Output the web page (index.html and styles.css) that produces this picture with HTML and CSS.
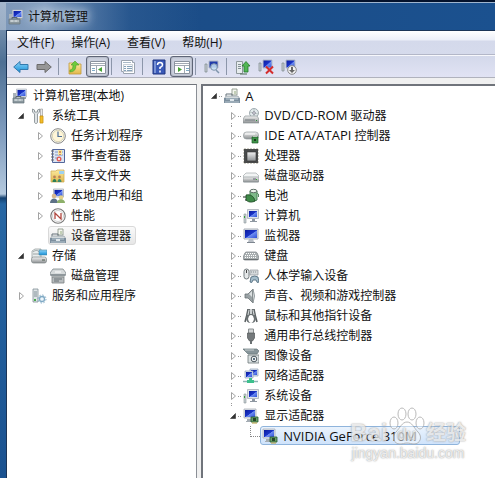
FILE: index.html
```html
<!DOCTYPE html>
<html lang="zh-CN">
<head>
    <meta charset="UTF-8">
    <meta name="viewport" content="width=device-width, initial-scale=1.0">
    <title>计算机管理</title>
    <link rel="stylesheet" href="styles.css">
</head>
<body>
    <!-- Icon set -->
    <svg class="sprite" aria-hidden="true">
        <defs>
            <linearGradient id="g-screen" x1="0" y1="0" x2="1" y2="1"><stop offset="0" stop-color="#0a1a9c"/><stop offset=".5" stop-color="#1a34c8"/><stop offset=".55" stop-color="#6d8cf0"/><stop offset="1" stop-color="#2f50d8"/></linearGradient>
            <linearGradient id="g-metal" x1="0" y1="0" x2="0" y2="1"><stop offset="0" stop-color="#f2f2f2"/><stop offset="1" stop-color="#8d9193"/></linearGradient>
            <linearGradient id="g-blue" x1="0" y1="0" x2="0" y2="1"><stop offset="0" stop-color="#8fd4f8"/><stop offset="1" stop-color="#1590d8"/></linearGradient>
            <linearGradient id="g-folder" x1="0" y1="0" x2="0" y2="1"><stop offset="0" stop-color="#fbeaa0"/><stop offset="1" stop-color="#e2b84c"/></linearGradient>

            <symbol id="closed" viewBox="0 0 16 20"><path d="M4.500 6.500v7l4-3.500z" fill="#fff" stroke="#a3a3a3"/></symbol>
            <symbol id="closed-line" viewBox="0 0 16 20"><path d="M4 0h1v1H4zM4 17h1v1H4zM4 19h1v1H4zM11 10h1v1h-1zM13 10h1v1h-1z" fill="#999"/><path d="M4.500 6.500v7l4-3.500z" fill="#fff" stroke="#a3a3a3"/></symbol>
            <symbol id="open" viewBox="0 0 16 20"><path d="M8.500 7.500v5h-5z" fill="#333" stroke="#333" stroke-width=".6"/></symbol>
            <symbol id="open-line" viewBox="0 0 16 20"><path d="M11 10h1v1h-1zM13 10h1v1h-1z" fill="#999"/><path d="M8.500 7.500v5h-5z" fill="#333" stroke="#333" stroke-width=".6"/></symbol>
            <symbol id="elbow" viewBox="0 0 16 20"><path d="M4.500 0v11M5 10.500h9" stroke="#888" stroke-dasharray="1 1" fill="none"/></symbol>

            <symbol id="monitor" viewBox="0 0 16 16"><path d="M1 1h14v10H1z" fill="#dfe4ec" stroke="#a9afb8"/><path d="M2 2h12v8H2z" fill="url(#g-screen)"/><path d="M6 11h4l1 3H5z" fill="#b8bec6"/><path d="M4 14h8v1H4z" fill="#7d858f"/></symbol>
            <symbol id="pc" viewBox="0 0 16 16"><path d="M1 6h2v9H1z" fill="#c8d0d4" stroke="#8c9498" stroke-width=".6"/><path d="M1 8h1v2H1z" fill="#35a135"/><path d="M4.500 1.500h11v9h-11z" fill="#dfe4ec" stroke="#a9afb8" stroke-width=".8"/><path d="M6 3h8v6H6z" fill="url(#g-screen)"/><path d="M9 11h3v2h2v1H7v-1h2z" fill="#8f98a2"/></symbol>
            <symbol id="manage" viewBox="0 0 16 16"><path d="M1 5h3v5H1z" fill="#aab3ba"/><path d="M4.500 1h10v8h-10z" fill="#dfe4ec" stroke="#a9afb8" stroke-width=".6"/><path d="M5.500 2h8v6h-8z" fill="url(#g-screen)"/><path d="M10 9h4v2h-4z" fill="#9aa3ab"/><path d="M1 10h11v5H1z" fill="#8b989f" stroke="#66737b" stroke-width=".7"/><path d="M2 12h9M4 11v2M8 11v2" stroke="#d7dfe2"/><path d="M4 10V8.500h5V10" fill="none" stroke="#59656d"/></symbol>
            <symbol id="tools" viewBox="0 0 16 16"><path d="M1.500 1v3l2 2v8c0 2 3 2 3 0V6l2-2V1L6.500 2v2h-3V2z" fill="#e0e4e6" stroke="#7f888c" stroke-width=".8"/><path d="M9.500 1h2v7h-2z" fill="#e9e9e9" stroke="#909090" stroke-width=".6"/><path d="M9 8h3v7H9z" fill="#f3bd28" stroke="#c99212" stroke-width=".8"/></symbol>
            <symbol id="clock" viewBox="0 0 16 16"><circle cx="8" cy="8" r="7.300" fill="#fbfbf2" stroke="#858585" stroke-width="1"/><circle cx="8" cy="8" r="5.700" fill="#fff6d8" stroke="#c9c3a0" stroke-width=".7"/><path d="M8 3.500v5h4" fill="none" stroke="#4d6f9a" stroke-width="1.200"/></symbol>
            <symbol id="event" viewBox="0 0 16 16"><path d="M2.500 1.500h12v13h-12z" fill="#dce5f3" stroke="#53679c"/><path d="M5 4h8M5 7h8M5 10h4" stroke="#8298c4"/><path d="M1 3h3M1 6h3M1 9h3M1 12h3" stroke="#6a6a6a"/><path d="M8 2h4v5H8z" fill="#f7e9a0"/><path d="M10 3v2M10 6v1" stroke="#b43322"/><circle cx="9" cy="11" r="2.500" fill="#e0605a"/><path d="M8 10l2 2m0-2l-2 2" stroke="#fff" stroke-width=".8"/></symbol>
            <symbol id="share" viewBox="0 0 16 16"><path d="M1 3h5l1-1h7v12H1z" fill="url(#g-folder)" stroke="#cfae5c" stroke-width=".8"/><path d="M9 3h5v3H9z" fill="#9fd1ef"/><circle cx="4.500" cy="9" r="1.400" fill="#b98258"/><circle cx="9.500" cy="9" r="1.400" fill="#b98258"/><path d="M2.500 14c0-4 4-4 4 0z" fill="#2c7f54"/><path d="M7.500 14c0-4 4-4 4 0z" fill="#3a8a70"/></symbol>
            <symbol id="users" viewBox="0 0 16 16"><path d="M3.500 1h10v8h-10z" fill="#dfe4ec" stroke="#a9afb8" stroke-width=".8"/><path d="M4.500 2h8v6h-8z" fill="url(#g-screen)"/><circle cx="4" cy="8" r="2.300" fill="#d8b88c"/><path d="M0 15c0-6 8-6 8 0z" fill="#5d7186"/><circle cx="11" cy="9.500" r="2.300" fill="#e5d189"/><path d="M7 15c0-5 8-5 8 0z" fill="#8db06a"/></symbol>
            <symbol id="perf" viewBox="0 0 16 16"><circle cx="8" cy="8" r="7.200" fill="#fff" stroke="#777" stroke-width="1.100"/><circle cx="8" cy="8" r="5.500" fill="#fff" stroke="#bbb" stroke-width=".7"/><path d="M5 11V5l6 6V5" fill="none" stroke="#b0463e" stroke-width="1.300"/></symbol>
            <symbol id="device" viewBox="0 0 16 16"><path d="M8 1h5v6H8z" fill="#f3f5ee" stroke="#8f9a8d" stroke-width=".9"/><path d="M10 3h2v3h-2z" fill="#c2cfb6"/><path d="M2 8V6h6v2" fill="none" stroke="#66737b"/><path d="M2 8h12l2 3H0z" fill="#d3d9dc" stroke="#849098" stroke-width=".6"/><path d="M0 10h16v5H0z" fill="#7d8f9e"/><path d="M2 11h12M1 14h14" stroke="#b9c7d0"/><path d="M6 11h4v2H6z" fill="#dfe7ec"/></symbol>
            <symbol id="storage" viewBox="0 0 16 16"><path d="M1 3l3-2h6v9H1z" fill="#e9eded" stroke="#8d9696" stroke-width=".7"/><path d="M2 4c2-2 5-2 6 0M2 6h6" stroke="#9ba4a5" fill="none"/><path d="M8 2h8v5H8z" fill="url(#g-blue)" stroke="#4f89a6" stroke-width=".6"/><rect x="0.500" y="9" width="15" height="6" rx="2" fill="url(#g-metal)" stroke="#808888" stroke-width=".7"/><path d="M11 12h3" stroke="#4b5b4d"/></symbol>
            <symbol id="disks" viewBox="0 0 16 16"><path d="M3 1h10l3 4-1 3H1L0 5z" fill="#d6dadb" stroke="#7f888b" stroke-width=".8"/><path d="M1 6h14v2H1z" fill="#8f979b"/><path d="M5 4h6" stroke="#fff"/><path d="M2 9h12v6H2z" fill="#b8bdbf" stroke="#787f82" stroke-width=".8"/><path d="M4 11h8M4 13h5" stroke="#666f73"/></symbol>
            <symbol id="services" viewBox="0 0 16 16"><path d="M2 1h5v13H2z" fill="#dfe5e7" stroke="#829097" stroke-width=".8"/><path d="M3 4h3M3 6h3M3 8h3" stroke="#819098"/><path d="M3 11h2v2H3z" fill="#48a94e"/><circle cx="11" cy="11" r="2.500" fill="#eef6fb" stroke="#7fa9c4" stroke-width="1.300"/><circle cx="11" cy="11" r="4" fill="none" stroke="#7fa9c4" stroke-dasharray="1.500 1.600"/></symbol>

            <symbol id="dvd" viewBox="0 0 16 16"><circle cx="11" cy="5" r="4.500" fill="#e4ebee" stroke="#8c989e" stroke-width=".8"/><path d="M11 1v8M7 4l8 2" stroke="#b8c5c0"/><circle cx="11" cy="5" r="1.300" fill="#fff" stroke="#889"/><path d="M2 8h12l2 3v4H0v-4z" fill="url(#g-metal)" stroke="#8c9598" stroke-width=".7"/><path d="M2 12h10" stroke="#757d80"/><path d="M13 12h1v1h-1z" fill="#2b8f39"/></symbol>
            <symbol id="ide" viewBox="0 0 16 16"><rect x="0.500" y="4" width="15" height="7" rx="3" fill="url(#g-metal)" stroke="#949b9e" stroke-width=".7"/><path d="M2 6h10" stroke="#fff"/><path d="M9 9h6v6H9z" fill="#3f9247" stroke="#1b5b26" stroke-width=".7"/><path d="M11 11h2v2h-2z" fill="#1b3b20"/><path d="M10 7h4v2h-4z" fill="#b9c3ba"/></symbol>
            <symbol id="cpu" viewBox="0 0 16 16"><path d="M2 0v16M5 0v16M8 0v16M11 0v16M14 0v16M0 2h16M0 5h16M0 8h16M0 11h16M0 14h16" stroke="#8f8a73" stroke-width=".8"/><path d="M1 1h14v14H1z" fill="#494b4b"/><path d="M4 4h9v9H4z" fill="url(#g-metal)" stroke="#333" stroke-width=".6"/></symbol>
            <symbol id="drive" viewBox="0 0 16 16"><path d="M3 5h10l3 3v5q0 1-1 1H1q-1 0-1-1V8z" fill="#f2f4f4" stroke="#a5abad" stroke-width=".7"/><path d="M0 9h16v4q0 1-1 1H1q-1 0-1-1z" fill="url(#g-metal)" stroke="#8e9598" stroke-width=".7"/><path d="M10 11h3" stroke="#667"/><path d="M13 11h1v1h-1z" fill="#30b030"/></symbol>
            <symbol id="battery" viewBox="0 0 16 16"><path d="M0 9h4M2 12h3" stroke="#69706c" stroke-width="1.500"/><path d="M7 3h7v9q-4 3-7 0z" fill="#7fbb8a" stroke="#4d8459"/><ellipse cx="10.500" cy="3" rx="3.500" ry="1.700" fill="#edf3ed" stroke="#61716a"/><path d="M3 7c4-1 8 1 9 6-4 2-7 1-9-1z" fill="#3f8a48" stroke="#1c4823" stroke-width=".8"/><path d="M14 5q2 0 1.500 4" fill="none" stroke="#4d8459"/></symbol>
            <symbol id="keyboard" viewBox="0 0 16 16"><path d="M3 4h10q1 0 2 3l1 3q0 2-2 2H2q-2 0-2-2l1-3q1-3 2-3z" fill="#a9afb1" stroke="#858c8f" stroke-width=".8"/><path d="M3 5.500h10M2 7.500h12M2 9.500h12" stroke="#fff" stroke-dasharray="1 1"/><path d="M1 11.500h14" stroke="#6a7072"/></symbol>
            <symbol id="hid" viewBox="0 0 16 16"><rect x="1" y="1" width="5" height="10" rx="2.500" fill="#e5e8e9" stroke="#757d80"/><path d="M3.500 2v3" stroke="#444"/><path d="M7 2h8v5H7z" fill="#d4d9db" stroke="#929a9d" stroke-width=".7"/><path d="M8 4h6" stroke="#879094" stroke-dasharray="1 1"/><path d="M7 14l1-5q4-2 7 0l1 5q-2 2-3-2h-3q-1 4-3 2z" fill="#a4bdcb" stroke="#476375" stroke-width=".8"/></symbol>
            <symbol id="sound" viewBox="0 0 16 16"><path d="M2 6h3l5-5v14l-5-5H2z" fill="#9aa2a5" stroke="#6b7275" stroke-width=".8"/><path d="M10 1q3 7 0 14" fill="#d7dcde" stroke="#959da0"/><path d="M6 6l3-3v6z" fill="#dce0e1"/></symbol>
            <symbol id="mouse" viewBox="0 0 16 16"><path d="M5 1q-1 6-3 13" stroke="#555b5d" stroke-width="1.500" fill="none"/><path d="M11 1q1 6 3 13" stroke="#555b5d" stroke-width="1.500" fill="none"/><path d="M5 1h6l2 9q0 5-5 5t-5-5z" fill="#6a7072"/><path d="M6 8q2-2 4 0l1 3q-1 4-3 4t-3-4z" fill="#fff"/><path d="M6 2l-1 5M10 2l1 5" stroke="#d5d9da"/><path d="M8 1v5" stroke="#f1f3f4" stroke-width="1.500"/></symbol>
            <symbol id="usb" viewBox="0 0 16 16"><path d="M5.500 1h5v5h-5z" fill="#d1d4d5" stroke="#8a8f91"/><path d="M4.500 5h7v5l-2 3h-3l-2-3z" fill="#74797b" stroke="#515657" stroke-width=".7"/><path d="M8 13v3" stroke="#6b7173" stroke-width="2"/></symbol>
            <symbol id="camera" viewBox="0 0 16 16"><path d="M0 1h14l2 2-2 3H5z" fill="#87959a" stroke="#66757a" stroke-width=".7"/><path d="M2 2h9" stroke="#c9cfd0"/><path d="M5 7h11v8H5z" fill="#dbe1e2" stroke="#6c777a" stroke-width=".8"/><circle cx="11" cy="11" r="2.800" fill="#fff" stroke="#48555c"/><circle cx="11" cy="11" r="1.200" fill="#556d7c"/></symbol>
            <symbol id="network" viewBox="0 0 16 16"><path d="M7 1h8v7H7z" fill="#dce5f1" stroke="#8c9eb6" stroke-width=".7"/><path d="M8 2h6v5H8z" fill="url(#g-screen)"/><path d="M2 3h8v7H2z" fill="#dce5f1" stroke="#8c9eb6" stroke-width=".7"/><path d="M3 4h6v5H3z" fill="url(#g-screen)"/><path d="M0 13.500h15" stroke="#8eb5b5" stroke-width="1.500"/><path d="M6 10v2H4v3h7v-3H9v-2z" fill="#3cc08c"/></symbol>
            <symbol id="display" viewBox="0 0 16 16"><path d="M1 1h12v9H1z" fill="#dfe4ec" stroke="#a9afb8" stroke-width=".8"/><path d="M2 2h10v7H2z" fill="url(#g-screen)"/><path d="M4 11h5v3H3v-1h1z" fill="#a5adb4"/><path d="M8 9h7v5H8z" fill="#689e6a" stroke="#275b2c" stroke-width=".8"/><path d="M10 10h3v3h-3z" fill="#26472a"/><path d="M9 15h5" stroke="#b29c3a"/></symbol>

            <symbol id="back" viewBox="0 0 16 16"><path d="M.700 8L7 2.500V5.500h8v5H7v3z" fill="url(#g-blue)" stroke="#3479ac"/></symbol>
            <symbol id="forward" viewBox="0 0 16 16"><path d="M15.300 8L9 2.500V5.500H1v5h8v3z" fill="#969696" stroke="#6b6b6b"/></symbol>
            <symbol id="up" viewBox="0 0 16 16"><path d="M2 4h6l1 1h5v10H2z" fill="url(#g-folder)" stroke="#c1993c" stroke-width=".8"/><path d="M3 11q3 0 3-5H4l4-4 4 4H9q0 7-6 7z" fill="#6dcb3c" stroke="#4b9a2d" stroke-width=".6"/></symbol>
            <symbol id="pane-left" viewBox="0 0 16 16"><path d="M.5 2.500h15v12H.5z" fill="#fff" stroke="#8a929e"/><path d="M1 4.500h14M1 6.500h14M6.500 7v7" stroke="#a2a9b3"/><path d="M2 9.500h3M2 11.500h3" stroke="#7eaac7"/><path d="M12 8v5l-4-2.500z" fill="#48a337"/></symbol>
            <symbol id="pane-right" viewBox="0 0 16 16"><path d="M.5 2.500h15v12H.5z" fill="#fff" stroke="#8a929e"/><path d="M1 4.500h14M1 6.500h14M10.500 7v7" stroke="#a2a9b3"/><path d="M12 9.500h3M12 11.500h3" stroke="#7eaac7"/><path d="M4 8v5l4-2.500z" fill="#48a337"/></symbol>
            <symbol id="props" viewBox="0 0 16 16"><path d="M1.500 1.500h11v2h2v11h-11v-2h-2z" fill="#fff" stroke="#9aa3af"/><path d="M3 3.500h8" stroke="#a9b9c7"/><path d="M3.500 5.500h9v7h-9z" fill="#f9fafb" stroke="#b5bcc5" stroke-width=".7"/><path d="M4 7.500h2M7 7.500h5M4 9.500h2M7 9.500h5M4 11.500h2M7 11.500h5" stroke="#86a2b8"/></symbol>
            <symbol id="help" viewBox="0 0 16 16"><path d="M2 1h12v14H2z" fill="#3a59b8" stroke="#203680"/><path d="M3 2h2v12H3z" fill="#7892d5"/><path d="M6.500 6q0-2.500 2.500-2.500t2.500 2.500q0 1.500-2.500 2.500v1.500M9 11.500v2" fill="none" stroke="#fff" stroke-width="1.500"/></symbol>
            <symbol id="scan" viewBox="0 0 16 16"><path d="M1 5h2v8H1z" fill="#c8d0d4" stroke="#7c868b" stroke-width=".7"/><path d="M5 2h9v7H5z" fill="#203caa" stroke="#b5bdc8"/><circle cx="10" cy="8" r="3.300" fill="#c9e4f6" fill-opacity=".85" stroke="#7f95ac"/><path d="M12 11l3 3" stroke="#7f95ac" stroke-width="1.500"/></symbol>
            <symbol id="update" viewBox="0 0 16 16"><path d="M1.500 2.500h6v12h-6z" fill="#e7ecee" stroke="#8f999d"/><path d="M3 5.500h3M3 7.500h3M3 9.500h3" stroke="#838f95"/><path d="M9 13V7H7l4-4.500L15 7h-2v6z" fill="#51b654" stroke="#24782b" stroke-width=".8"/><path d="M5 15h7" stroke="#4f6a54"/></symbol>
            <symbol id="remove" viewBox="0 0 16 16"><path d="M1 4h2v8H1z" fill="#c8d0d4" stroke="#7c868b" stroke-width=".7"/><path d="M5 1h9v8H5z" fill="url(#g-screen)" stroke="#b5bdc8"/><path d="M8 7.500l7 7M15 7.500l-7 7" stroke="#d42c2c" stroke-width="2"/></symbol>
            <symbol id="disable" viewBox="0 0 16 16"><path d="M1 4h2v8H1z" fill="#c8d0d4" stroke="#7c868b" stroke-width=".7"/><path d="M5 1h9v8H5z" fill="url(#g-screen)" stroke="#b5bdc8"/><circle cx="11" cy="11" r="4.300" fill="#f3f3f3" stroke="#888"/><path d="M10 8h2v3h2l-3 3-3-3h2z" fill="#666"/></symbol>
        </defs>
    </svg>

    <div class="window">
        <header class="titlebar">
            <svg class="icon"><use href="#manage"/></svg>
            <h1>计算机管理</h1>
        </header>

        <main class="client">
            <nav class="menubar">
                <button>文件(F)</button>
                <button>操作(A)</button>
                <button>查看(V)</button>
                <button>帮助(H)</button>
            </nav>

            <div class="toolbar" role="toolbar">
                <button aria-label="后退"><svg class="icon"><use href="#back"/></svg></button>
                <button aria-label="前进"><svg class="icon"><use href="#forward"/></svg></button>
                <span class="separator"></span>
                <button aria-label="向上"><svg class="icon"><use href="#up"/></svg></button>
                <button class="pressed" aria-label="控制台树" aria-pressed="true"><svg class="icon"><use href="#pane-left"/></svg></button>
                <span class="separator"></span>
                <button aria-label="属性"><svg class="icon"><use href="#props"/></svg></button>
                <span class="separator"></span>
                <button aria-label="帮助"><svg class="icon"><use href="#help"/></svg></button>
                <button class="pressed" aria-label="操作窗格" aria-pressed="true"><svg class="icon"><use href="#pane-right"/></svg></button>
                <span class="separator"></span>
                <button aria-label="扫描"><svg class="icon"><use href="#scan"/></svg></button>
                <span class="separator"></span>
                <button aria-label="更新"><svg class="icon"><use href="#update"/></svg></button>
                <button aria-label="卸载"><svg class="icon"><use href="#remove"/></svg></button>
                <button aria-label="禁用"><svg class="icon"><use href="#disable"/></svg></button>
            </div>

            <div class="panes">
                <section class="pane console">
                    <ul class="tree" role="tree">
                        <li>
                            <div class="row root"><span class="item"><svg class="icon"><use href="#manage"/></svg>计算机管理(本地)</span></div>
                        </li>
                        <li>
                            <div class="row"><svg class="twisty"><use href="#open"/></svg><span class="item"><svg class="icon"><use href="#tools"/></svg>系统工具</span></div>
                            <ul>
                                <li class="row"><svg class="twisty"><use href="#closed"/></svg><span class="item"><svg class="icon"><use href="#clock"/></svg>任务计划程序</span></li>
                                <li class="row"><svg class="twisty"><use href="#closed"/></svg><span class="item"><svg class="icon"><use href="#event"/></svg>事件查看器</span></li>
                                <li class="row"><svg class="twisty"><use href="#closed"/></svg><span class="item"><svg class="icon"><use href="#share"/></svg>共享文件夹</span></li>
                                <li class="row"><svg class="twisty"><use href="#closed"/></svg><span class="item"><svg class="icon"><use href="#users"/></svg>本地用户和组</span></li>
                                <li class="row"><svg class="twisty"><use href="#closed"/></svg><span class="item"><svg class="icon"><use href="#perf"/></svg>性能</span></li>
                                <li class="row"><svg class="twisty"></svg><span class="item current"><svg class="icon"><use href="#device"/></svg>设备管理器</span></li>
                            </ul>
                        </li>
                        <li>
                            <div class="row"><svg class="twisty"><use href="#open"/></svg><span class="item"><svg class="icon"><use href="#storage"/></svg>存储</span></div>
                            <ul>
                                <li class="row"><svg class="twisty"></svg><span class="item"><svg class="icon"><use href="#disks"/></svg>磁盘管理</span></li>
                            </ul>
                        </li>
                        <li>
                            <div class="row"><svg class="twisty"><use href="#closed"/></svg><span class="item"><svg class="icon"><use href="#services"/></svg>服务和应用程序</span></div>
                        </li>
                    </ul>
                </section>

                <section class="pane devices">
                    <ul class="tree" role="tree">
                        <li>
                            <div class="row"><svg class="twisty"><use href="#open-line"/></svg><span class="item"><svg class="icon"><use href="#device"/></svg><span class="en">A</span></span></div>
                            <ul>
                                <li class="row"><svg class="twisty"><use href="#closed-line"/></svg><span class="item"><svg class="icon"><use href="#dvd"/></svg><span><span class="en">DVD/CD-ROM</span> 驱动器</span></span></li>
                                <li class="row"><svg class="twisty"><use href="#closed-line"/></svg><span class="item"><svg class="icon"><use href="#ide"/></svg><span><span class="en">IDE ATA/ATAPI</span> 控制器</span></span></li>
                                <li class="row"><svg class="twisty"><use href="#closed-line"/></svg><span class="item"><svg class="icon"><use href="#cpu"/></svg>处理器</span></li>
                                <li class="row"><svg class="twisty"><use href="#closed-line"/></svg><span class="item"><svg class="icon"><use href="#drive"/></svg>磁盘驱动器</span></li>
                                <li class="row"><svg class="twisty"><use href="#closed-line"/></svg><span class="item"><svg class="icon"><use href="#battery"/></svg>电池</span></li>
                                <li class="row"><svg class="twisty"><use href="#closed-line"/></svg><span class="item"><svg class="icon"><use href="#pc"/></svg>计算机</span></li>
                                <li class="row"><svg class="twisty"><use href="#closed-line"/></svg><span class="item"><svg class="icon"><use href="#monitor"/></svg>监视器</span></li>
                                <li class="row"><svg class="twisty"><use href="#closed-line"/></svg><span class="item"><svg class="icon"><use href="#keyboard"/></svg>键盘</span></li>
                                <li class="row"><svg class="twisty"><use href="#closed-line"/></svg><span class="item"><svg class="icon"><use href="#hid"/></svg>人体学输入设备</span></li>
                                <li class="row"><svg class="twisty"><use href="#closed-line"/></svg><span class="item"><svg class="icon"><use href="#sound"/></svg>声音、视频和游戏控制器</span></li>
                                <li class="row"><svg class="twisty"><use href="#closed-line"/></svg><span class="item"><svg class="icon"><use href="#mouse"/></svg>鼠标和其他指针设备</span></li>
                                <li class="row"><svg class="twisty"><use href="#closed-line"/></svg><span class="item"><svg class="icon"><use href="#usb"/></svg>通用串行总线控制器</span></li>
                                <li class="row"><svg class="twisty"><use href="#closed-line"/></svg><span class="item"><svg class="icon"><use href="#camera"/></svg>图像设备</span></li>
                                <li class="row"><svg class="twisty"><use href="#closed-line"/></svg><span class="item"><svg class="icon"><use href="#network"/></svg>网络适配器</span></li>
                                <li class="row"><svg class="twisty"><use href="#closed-line"/></svg><span class="item"><svg class="icon"><use href="#pc"/></svg>系统设备</span></li>
                                <li>
                                    <div class="row"><svg class="twisty"><use href="#open-line"/></svg><span class="item"><svg class="icon"><use href="#display"/></svg>显示适配器</span></div>
                                    <ul>
                                        <li class="row"><svg class="twisty"><use href="#elbow"/></svg><span class="item selected"><svg class="icon"><use href="#display"/></svg><span class="en">NVIDIA GeForce 310M</span></span></li>
                                    </ul>
                                </li>
                            </ul>
                        </li>
                    </ul>
                </section>
            </div>
        </main>
    </div>

    <div class="watermark">
        <div class="brand">
            <span class="latin">Bai</span>
            <span class="paw">
                <svg viewBox="0 0 36 38" aria-hidden="true">
                    <g fill="#fff" fill-opacity=".6" stroke="#aaa">
                        <ellipse cx="5" cy="16" rx="4" ry="6"/>
                        <ellipse cx="13" cy="7" rx="4" ry="6"/>
                        <ellipse cx="23" cy="7" rx="4" ry="6"/>
                        <ellipse cx="31" cy="16" rx="4" ry="6"/>
                        <path d="M18 15c5 0 7 6 11 10 5 5 2 12-4 12-3 0-4-1-7-1s-4 1-7 1c-6 0-9-7-4-12 4-4 6-10 11-10z"/>
                    </g>
                </svg>
                <span class="du">du</span>
            </span>
            <span class="hanzi">经验</span>
        </div>
        <div class="site">jingyan.baidu.com</div>
    </div>
</body>
</html>
```

FILE: styles.css
```css
* {
    box-sizing: border-box;
}
body {
    margin: 0;
    font-family: "Open Sans", "Noto Sans CJK SC", sans-serif;
    font-size: 12px;
    line-height: 20px;
    color: #111;
    background-color: #1d528e;
    overflow: hidden;
}
button {
    padding: 0;
    border: 0;
    background: none;
    font: inherit;
    color: inherit;
}
ul {
    list-style: none;
    margin: 0;
    padding: 0;
}
.sprite {
    position: absolute;
    width: 0;
    height: 0;
}
.icon {
    flex: none;
    display: block;
    width: 16px;
    height: 16px;
}
.en {
    font-size: 13px;
}

/* Window frame */
.window {
    display: flex;
    flex-direction: column;
    height: 100vh;
    padding-left: 6px;
    border-top: 2px solid #04122c;
    background:
        linear-gradient(90deg, rgba(176, 192, 212, 0.65), rgba(176, 194, 216, 0.7) 45px, rgba(130, 158, 192, 0.5) 85px, rgba(90, 130, 175, 0.2) 130px, transparent 200px) 0 0 / 100% 28px no-repeat,
        linear-gradient(#8da3bd, #4e7094 60px, #7f9cbe 130px, #b4c9de 192px, #14406f 196px, #2767a4 202px, #1b5290) 0 0 / 6px 100% no-repeat,
        linear-gradient(90deg, #1b4a83, #1b518f);
}
.titlebar {
    display: flex;
    align-items: center;
    gap: 4px;
    height: 28px;
    padding-left: 2px;
    border-top: 1px solid #9fb5cf;
}
.titlebar h1 {
    margin: 0;
    font-size: 12px;
    font-weight: normal;
    text-shadow: 0 0 8px #dde6f0, 0 0 12px #dde6f0;
}
.client {
    flex: 1;
    display: flex;
    flex-direction: column;
    min-height: 0;
    border-top: 1px solid #1c3557;
    border-left: 1px solid #1c3557;
    background-color: #f0f0f0;
}

/* Menu and toolbar */
.menubar {
    display: flex;
    gap: 17px;
    height: 24px;
    padding-left: 10px;
    border-bottom: 1px solid #b3b7c8;
    background: linear-gradient(#fff, #eceff8 9px, #d4d9eb 10px, #d6dbec);
}
.toolbar {
    display: flex;
    align-items: center;
    height: 23px;
    padding-left: 2px;
    border-top: 1px solid #f7f8fc;
    border-bottom: 1px solid #b0b2bd;
    background: linear-gradient(#d3d8ea, #e1e3f4);
}
.toolbar button {
    display: flex;
    align-items: center;
    justify-content: center;
    width: 23px;
    height: 21px;
}
.toolbar .pressed {
    border: 1px solid #5e6576;
    border-radius: 3px;
    background-color: #ccd1de;
    box-shadow: inset 0 0 2px #858b9b;
}
.separator {
    width: 1px;
    height: 17px;
    margin: 0 4px 0 3px;
    background-color: #8c96aa;
}
.toolbar .pressed + .separator {
    margin-left: 2px;
}

/* Trees */
.panes {
    flex: 1;
    display: flex;
    gap: 4px;
    min-height: 0;
    padding-top: 6px;
}
.pane {
    border-top: 1px solid #70747b;
    background-color: #fff;
    overflow: hidden;
}
.console {
    flex: 0 0 39%;
    padding-left: 8px;
    border-right: 1px solid #8b8f96;
}
.devices {
    flex: 1;
    padding-left: 5px;
    border-top-width: 2px;
    border-left: 2px solid #70747b;
}
.console .tree {
    padding-top: 1px;
}
.tree ul {
    padding-left: 19px;
}
.row {
    display: flex;
    height: 20px;
}
.twisty {
    flex: none;
    width: 16px;
    height: 20px;
}
.item {
    display: flex;
    align-items: center;
    gap: 5px;
    height: 19px;
    margin-left: -2px;
    padding: 0 4px 0 1px;
    border: 1px solid transparent;
    border-radius: 3px;
    white-space: nowrap;
}
.root .item {
    margin-left: -5px;
}
.current {
    border-color: #d9d9d9;
    background: linear-gradient(#fafafa, #e6e6e6);
}
.selected {
    min-width: 200px;
    border-color: #8fb4dc;
    background: linear-gradient(#eaf3fd, #cfe3fb);
}

/* Site mark over the lower right corner */
.watermark {
    position: absolute;
    right: 29px;
    bottom: 17px;
    width: 116px;
    color: rgba(255, 255, 255, 0.75);
    text-shadow: 0 0 1px #999, 0 0 2px #aaa;
    opacity: 0.8;
}
.brand {
    display: flex;
    align-items: flex-end;
    justify-content: space-between;
}
.latin {
    font: bold 24px/24px "Liberation Sans", sans-serif;
}
.paw {
    position: relative;
    width: 36px;
    height: 38px;
}
.paw svg {
    display: block;
    width: 36px;
    height: 38px;
}
.du {
    position: absolute;
    left: 8px;
    bottom: 2px;
    font: bold 16px/16px "Liberation Sans", sans-serif;
}
.hanzi {
    font: bold 20px/26px "Noto Sans CJK SC", sans-serif;
}
.site {
    font: 14px/16px "Liberation Sans", sans-serif;
    text-align: center;
}
```
